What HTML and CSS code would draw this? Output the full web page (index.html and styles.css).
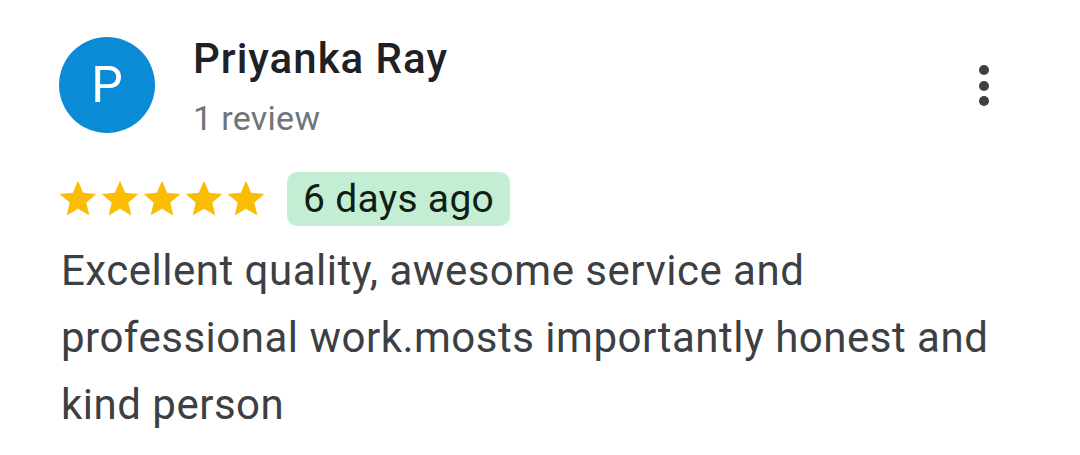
FILE: index.html
```html
<!DOCTYPE html>
<html>
<head>
<meta charset="utf-8">
<link rel="stylesheet" href="styles.css">
</head>
<body>
<div class="review">
  <div class="header">
    <div class="avatar">P</div>
    <div class="who">
      <div class="name">Priyanka Ray</div>
      <div class="count">1 review</div>
    </div>
    <div class="more">
      <span class="dot"></span><span class="dot"></span><span class="dot"></span>
    </div>
  </div>
  <div class="meta">
    <div class="stars">
      <svg viewBox="0 0 24 24" class="star"><path d="M12 17.27L18.18 21l-1.64-7.03L22 9.24l-7.19-.61L12 2 9.19 8.63 2 9.24l5.46 4.73L5.82 21z"/></svg>
      <svg viewBox="0 0 24 24" class="star"><path d="M12 17.27L18.18 21l-1.64-7.03L22 9.24l-7.19-.61L12 2 9.19 8.63 2 9.24l5.46 4.73L5.82 21z"/></svg>
      <svg viewBox="0 0 24 24" class="star"><path d="M12 17.27L18.18 21l-1.64-7.03L22 9.24l-7.19-.61L12 2 9.19 8.63 2 9.24l5.46 4.73L5.82 21z"/></svg>
      <svg viewBox="0 0 24 24" class="star"><path d="M12 17.27L18.18 21l-1.64-7.03L22 9.24l-7.19-.61L12 2 9.19 8.63 2 9.24l5.46 4.73L5.82 21z"/></svg>
      <svg viewBox="0 0 24 24" class="star"><path d="M12 17.27L18.18 21l-1.64-7.03L22 9.24l-7.19-.61L12 2 9.19 8.63 2 9.24l5.46 4.73L5.82 21z"/></svg>
    </div>
    <div class="badge">6 days ago</div>
  </div>
  <p class="text">Excellent quality, awesome service and professional work.mosts importantly honest and kind person</p>
</div>
</body>
</html>
```
FILE: styles.css
```css
html, body {
  margin: 0;
  padding: 0;
  background: #ffffff;
}
body {
  font-family: Roboto, "Noto Sans", sans-serif;
  width: 1080px;
  height: 455px;
  overflow: hidden;
}
.review {
  padding: 37px 0 0 59px;
}
.header {
  display: flex;
  align-items: flex-start;
}
.avatar {
  width: 96px;
  height: 96px;
  border-radius: 50%;
  background: #0b8ad6;
  color: #fff;
  font-size: 50px;
  display: flex;
  align-items: center;
  justify-content: center;
  flex-shrink: 0;
}
.who {
  margin-left: 38px;
  flex: 1;
}
.name {
  font-size: 42px;
  font-weight: 500;
  color: #202124;
  line-height: 48px;
  margin-top: -2px;
  letter-spacing: 1px;
}
.count {
  font-size: 34px;
  color: #70757a;
  line-height: 40px;
  margin-top: 15px;
  letter-spacing: 0.3px;
}
.more {
  display: flex;
  flex-direction: column;
  gap: 5.5px;
  margin-top: 28px;
  margin-right: 91px;
}
.dot {
  width: 10px;
  height: 10px;
  border-radius: 50%;
  background: #3c4043;
}
.meta {
  display: flex;
  align-items: center;
  margin-top: 34px;
}
.stars {
  display: flex;
  margin-left: -3px;
}
.star {
  width: 44px;
  height: 44px;
  fill: #fbbc04;
  margin-right: -2px;
}
.badge {
  margin-left: 21px;
  background: #c4eed3;
  color: #0f1f15;
  border-radius: 10px;
  font-size: 39px;
  height: 54px;
  line-height: 54px;
  padding: 0 16px;
  letter-spacing: 0.3px;
}
.text {
  margin: 11px 0 0 2px;
  width: 940px;
  font-size: 42px;
  line-height: 67px;
  color: #3c4043;
  letter-spacing: 0.5px;
}
```
